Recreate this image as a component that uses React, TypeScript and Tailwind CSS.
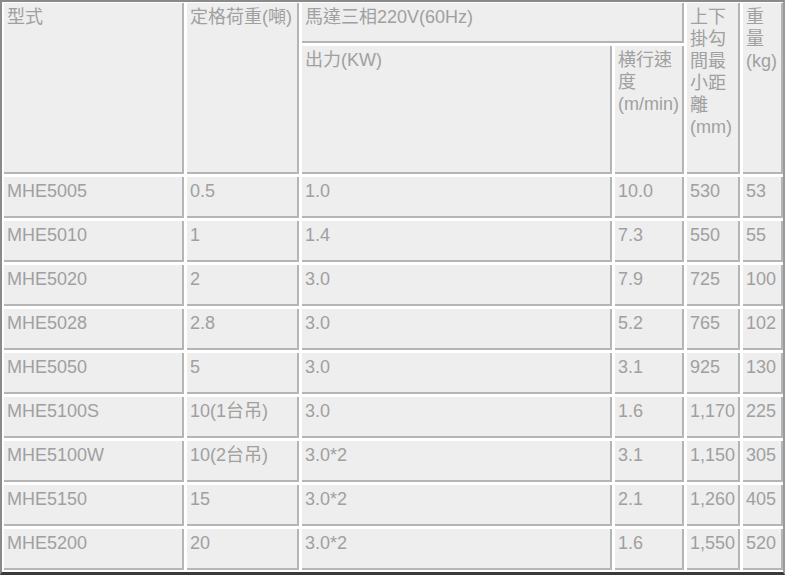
import React from "react";

const rows: string[][] = [
  ["MHE5005", "0.5", "1.0", "10.0", "530", "53"],
  ["MHE5010", "1", "1.4", "7.3", "550", "55"],
  ["MHE5020", "2", "3.0", "7.9", "725", "100"],
  ["MHE5028", "2.8", "3.0", "5.2", "765", "102"],
  ["MHE5050", "5", "3.0", "3.1", "925", "130"],
  ["MHE5100S", "10(1台吊)", "3.0", "1.6", "1,170", "225"],
  ["MHE5100W", "10(2台吊)", "3.0*2", "3.1", "1,150", "305"],
  ["MHE5150", "15", "3.0*2", "2.1", "1,260", "405"],
  ["MHE5200", "20", "3.0*2", "1.6", "1,550", "520"],
];

const cell =
  "bg-[#eeeeee] border-r-2 border-b-2 border-[#b5b5b5] pl-[3px] pr-[1px] pt-[3px] overflow-hidden";

export default function App() {
  return (
    <div className="w-[785px] h-[575px] bg-white">
      <div
        className="w-[785px] h-[575px] border-l-2 border-t-2 border-r-2 border-b-[3px] border-l-[#8a8a8a] border-t-[#8a8a8a] border-r-[#9a9a9a] border-b-[#3a3a3a] pl-[2px] pt-[1px] pb-[2px] grid grid-cols-[180px_112px_310px_69px_53px_40px] grid-rows-[40px_128px_repeat(9,41px)] gap-x-[3px] gap-y-[3px] text-[18px] leading-[22px] text-[#a0a0a0]"
        style={{ fontFamily: '"Liberation Sans", Arial, "Noto Sans CJK TC", sans-serif' }}
      >
        <div className={`${cell} row-span-2`}>型式</div>
        <div className={`${cell} row-span-2`}>定格荷重(噸)</div>
        <div className={`${cell} col-span-2`}>馬達三相220V(60Hz)</div>
        <div className={`${cell} row-span-2`}>上下掛勾間最小距離(mm)</div>
        <div className={`${cell} row-span-2`}>重量(kg)</div>
        <div className={cell}>出力(KW)</div>
        <div className={cell}>横行速度(m/min)</div>
        {rows.map((r) =>
          r.map((v, i) => (
            <div key={r[0] + i} className={`${cell} whitespace-nowrap`}>
              {v}
            </div>
          ))
        )}
      </div>
    </div>
  );
}
